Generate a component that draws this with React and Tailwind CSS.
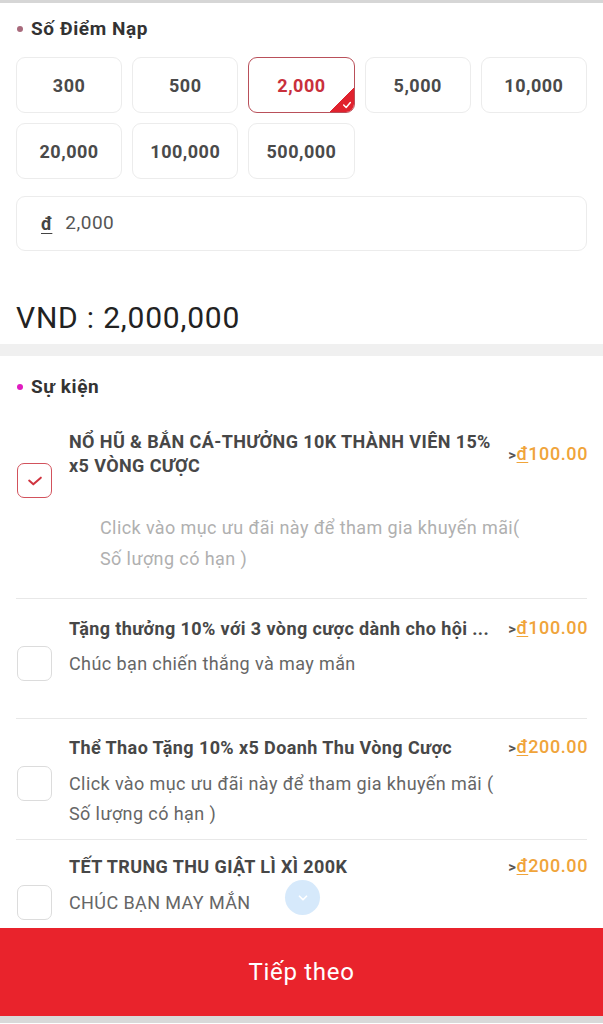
import React from 'react';

const amounts = ['300', '500', '2,000', '5,000', '10,000', '20,000', '100,000', '500,000'];

const Bullet = ({ color, children }) => (
    <div className="flex items-center gap-[8px] pl-[17px]">
        <span className={`h-[6px] w-[6px] rounded-full ${color}`} />
        <span className="text-[19px] leading-[24px] font-bold tracking-[0.6px] text-[#333]">{children}</span>
    </div>
);

const Check = ({ checked }) => (
    checked ? (
        <div className="flex h-[35px] w-[35px] shrink-0 items-center justify-center rounded-[7px] border-[1.5px] border-[#d2525c] bg-white">
            <svg width="20" height="20" viewBox="0 0 24 24" fill="none" stroke="#d0343f" strokeWidth="2.4" strokeLinecap="round" strokeLinejoin="round">
                <path d="M5 11.5l5 4.5L19 8" />
            </svg>
        </div>
    ) : (
        <div className="h-[35px] w-[35px] shrink-0 rounded-[7px] border-[1.5px] border-[#dcdcdc] bg-white" />
    )
);

const Price = ({ value }) => (
    <span className="shrink-0 whitespace-nowrap text-[18px] leading-[24px] tracking-[0.6px]">
        <span className="text-[15px] font-bold text-[#555]">&gt;</span>
        <span className="font-medium text-[#f0a43a] underline decoration-[1px] underline-offset-[2px]">đ</span>
        <span className="font-medium text-[#f0a43a]">{value}</span>
    </span>
);

const Title = ({ children, price }) => (
    <div className="flex items-center justify-between gap-[2px] pl-[69px] pr-[15px]">
        <div className="min-w-0 flex-1 text-[18px] leading-[24px] font-bold tracking-[0.4px] text-[#474747]">{children}</div>
        <Price value={price} />
    </div>
);

const App = () => (
    <div className="min-h-[1024px] bg-white font-['Roboto','Noto_Sans',sans-serif]">
        <div className="h-[3px] bg-[#d6d6d6]" />

        <div className="pt-[14px]">
            <Bullet color="bg-[#a86a7c]">Số Điểm Nạp</Bullet>

            <div className="mt-[16px] grid grid-cols-5 gap-[10px] px-4">
                {amounts.map((a) => {
                    const active = a === '2,000';
                    return (
                        <div
                            key={a}
                            className={`relative flex h-[56px] items-center justify-center overflow-hidden rounded-[9px] bg-white text-[18px] font-bold tracking-[0.5px] ${active ? 'border-[1.5px] border-[#b9505a] text-[#c9303c]' : 'border border-[#ececec] text-[#4a4a4a]'}`}
                        >
                            {a}
                            {active && (
                                <div className="absolute bottom-0 right-0 h-[24px] w-[24px] bg-[linear-gradient(135deg,transparent_50%,#e0222e_50%)]">
                                    <svg className="absolute bottom-[2px] right-[2px]" width="10" height="10" viewBox="0 0 24 24" fill="none" stroke="white" strokeWidth="3.5" strokeLinecap="round" strokeLinejoin="round">
                                        <path d="M4 12l6 6L20 6" />
                                    </svg>
                                </div>
                            )}
                        </div>
                    );
                })}
            </div>

            <div className="mx-4 mt-[17px] flex h-[55px] items-center rounded-[9px] border border-[#ececec] pl-[24px]">
                <span className="text-[18px] font-bold text-[#444] underline underline-offset-[3px]">đ</span>
                <span className="ml-[13px] text-[19px] tracking-[0.5px] text-[#555]">2,000</span>
            </div>

            <div className="mt-[50px] pl-[16px] text-[30px] leading-[34px] tracking-[0.8px] text-[#222]">VND : 2,000,000</div>
        </div>

        <div className="mt-[9px] h-[12px] bg-[#f0f0f0]" />

        <div className="pt-[19px]">
            <Bullet color="bg-[#e01cc0]">Sự kiện</Bullet>

            <div className="mt-[31px]">
                <Title price="100.00">NỔ HŨ &amp; BẮN CÁ-THƯỞNG 10K THÀNH VIÊN 15% x5 VÒNG CƯỢC</Title>
                <div className="-mt-[15px] pl-[17px]">
                    <Check checked />
                </div>
                <div className="mt-[14px] pl-[100px] pr-[73px] text-[18px] leading-[31px] tracking-[0.4px] text-[#b0b0b0]">
                    Click vào mục ưu đãi này để tham gia khuyến mãi( Số lượng có hạn )
                </div>
                <div className="mx-4 mt-[24px] h-px bg-[#e8e8e8]" />
            </div>

            <div className="pt-[17px]">
                <Title price="100.00">Tặng thưởng 10% với 3 vòng cược dành cho hội ...</Title>
                <div className="mt-[5px] flex items-start gap-[17px] pl-[17px]">
                    <Check />
                    <div className="mt-[3px] text-[18px] leading-[30px] tracking-[0.4px] text-[#666]">Chúc bạn chiến thắng và may mắn</div>
                </div>
                <div className="mx-4 mt-[37px] h-px bg-[#e8e8e8]" />
            </div>

            <div className="pt-[16px]">
                <Title price="200.00">Thể Thao Tặng 10% x5 Doanh Thu Vòng Cược</Title>
                <div className="mt-[6px] flex items-start gap-[17px] pl-[17px] pr-[90px]">
                    <Check />
                    <div className="mt-[3px] text-[18px] leading-[30px] tracking-[0.4px] text-[#666]">Click vào mục ưu đãi này để tham gia khuyến mãi ( Số lượng có hạn )</div>
                </div>
                <div className="mx-4 mt-[10px] h-px bg-[#e8e8e8]" />
            </div>

            <div className="relative pt-[14px]">
                <Title price="200.00">TẾT TRUNG THU GIẬT LÌ XÌ 200K</Title>
                <div className="mt-[6px] flex items-start gap-[17px] pl-[17px]">
                    <Check />
                    <div className="mt-[3px] text-[18px] leading-[30px] tracking-[0.4px] text-[#666]">CHÚC BẠN MAY MẮN</div>
                </div>
                <div className="absolute left-[285px] top-[40px] flex h-[35px] w-[35px] items-center justify-center rounded-full bg-[#d6e9fb]">
                    <svg width="14" height="14" viewBox="0 0 24 24" fill="none" stroke="white" strokeWidth="3" strokeLinecap="round" strokeLinejoin="round">
                        <path d="M6 9l6 6 6-6" />
                    </svg>
                </div>
            </div>
        </div>

        <div className="mt-[8px] flex h-[88px] items-center justify-center bg-[#e9232c] text-[24px] tracking-[0.7px] text-white">
            Tiếp theo
        </div>
        <div className="h-[7px] bg-[#d9d9d9]" />
    </div>
);

export default App;
